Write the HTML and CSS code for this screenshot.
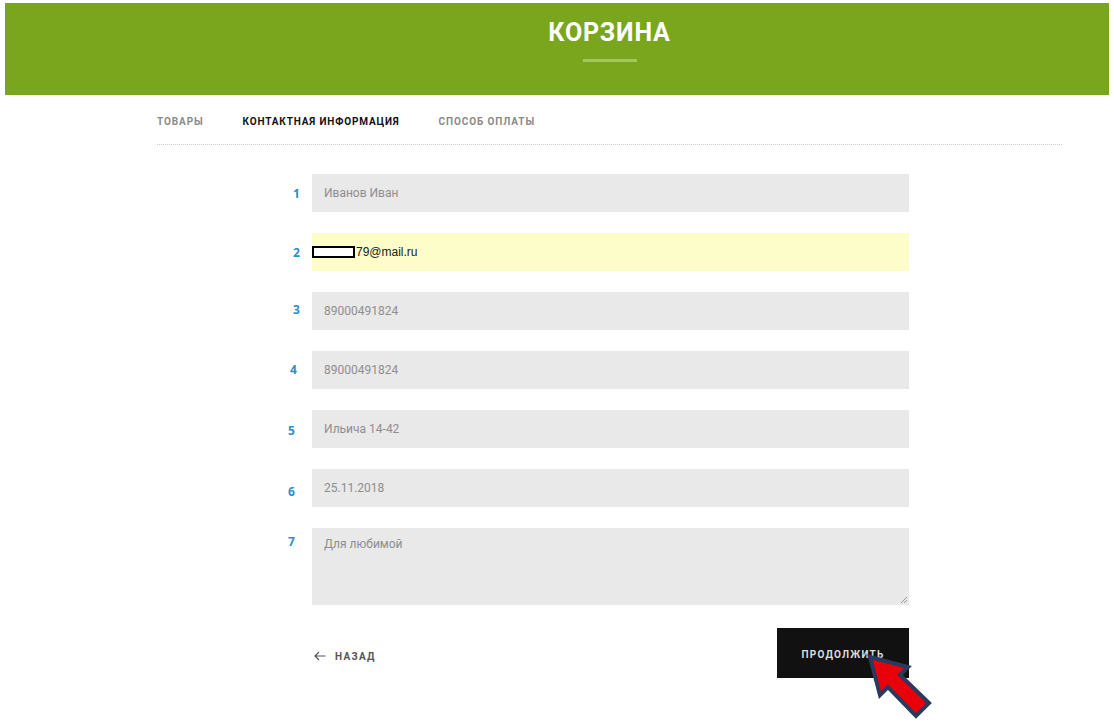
FILE: index.html
```html
<!DOCTYPE html>
<html lang="ru">
<head>
    <meta charset="UTF-8">
    <meta name="viewport" content="width=device-width, initial-scale=1.0">
    <title>Корзина</title>
    <link rel="stylesheet" href="styles.css">
</head>
<body>
    <div class="banner">
        <h1 class="banner_title">КОРЗИНА</h1>
        <div class="banner_line"></div>
    </div>

    <div class="wrap">
        <ul class="steps">
            <li>ТОВАРЫ</li>
            <li class="active">КОНТАКТНАЯ ИНФОРМАЦИЯ</li>
            <li>СПОСОБ ОПЛАТЫ</li>
        </ul>

        <form class="order">
            <span class="num">1</span>
            <div class="field">Иванов Иван</div>

            <span class="num">2</span>
            <div class="field field_auto"><i class="hide"></i>79@mail.ru</div>

            <span class="num n3">3</span>
            <div class="field">89000491824</div>

            <span class="num n4">4</span>
            <div class="field">89000491824</div>

            <span class="num n5">5</span>
            <div class="field">Ильича 14-42</div>

            <span class="num n6">6</span>
            <div class="field">25.11.2018</div>

            <span class="num n7">7</span>
            <div class="field field_area">Для любимой
                <svg class="grip" width="8" height="8" viewBox="0 0 8 8"><path d="M7 1L1 7M7 4L4 7" stroke="#999" stroke-width="1"/></svg>
            </div>

            <span></span>
            <div class="actions">
                <a href="javascript:;" class="back">
                    <svg class="back_arrow" width="12" height="10" viewBox="0 0 12 10"><path d="M11.5 5H1M5 1L1 5L5 9" fill="none" stroke="#555" stroke-width="1.2"/></svg>
                    НАЗАД
                </a>
                <a href="javascript:;" class="next">ПРОДОЛЖИТЬ</a>
                <!-- стрелка-указатель поверх кнопки -->
                <svg class="pointer" width="76" height="80" viewBox="0 0 76 80">
                    <polygon points="10,10 48,20 40,28 69,56 56,69 28,40 20,48" fill="#e8000b" stroke="#2b3a5c" stroke-width="4"/>
                </svg>
            </div>
        </form>
    </div>
</body>
</html>
```

FILE: styles.css
```css
*{
    margin: 0;
    padding: 0;
    box-sizing: border-box;
}
ul{
    list-style: none;
}
a{
    text-decoration: none;
}
body{
    font-family: Roboto, "Liberation Sans", Arial, sans-serif;
    background-color: #fff;
    color: #222;
    padding-bottom: 49px;
}
.banner{
    margin: 3px 5px 0;
    height: 92px;
    background-color: #7aa61e;
    padding-top: 15px;
    padding-left: 105px;
    display: flex;
    flex-direction: column;
    align-items: center;
}
.banner_title{
    color: #fff;
    font-size: 25px;
    font-weight: 700;
    letter-spacing: 0.8px;
    line-height: 30px;
}
.banner_line{
    width: 54px;
    height: 3px;
    margin-top: 11px;
    background-color: #a3c75a;
}
.wrap{
    width: 905px;
    margin-left: 157px;
}
.steps{
    display: flex;
    gap: 39px;
    padding-top: 21px;
    padding-bottom: 16px;
    border-bottom: 1px dotted #c9c9c9;
}
.steps li{
    font-size: 10px;
    font-weight: 700;
    letter-spacing: 0.9px;
    line-height: 12px;
    color: #8a8a8a;
}
.steps li.active{
    color: #111;
    letter-spacing: 0.85px;
}
.order{
    display: grid;
    grid-template-columns: 155px 597px;
    row-gap: 21px;
    margin-top: 29px;
}
.num{
    font-family: "Open Sans", "Liberation Sans", sans-serif;
    font-weight: 700;
    font-size: 12px;
    color: #2b90c8;
    padding-left: 136px;
    padding-top: 11px;
}
.n3{ padding-top: 9px; }
.n4{ padding-left: 133px; padding-top: 10px; }
.n5{ padding-left: 131px; padding-top: 12px; }
.n6{ padding-left: 131px; padding-top: 14px; }
.n7{ padding-left: 131px; padding-top: 5px; }
.field{
    position: relative;
    height: 38px;
    background-color: #e9e9e9;
    padding-left: 12px;
    display: flex;
    align-items: center;
    font-size: 12px;
    color: #8e8e8e;
}
.field_auto{
    background-color: #fdfdc9;
    padding-left: 0;
    font-family: "Liberation Sans", Arial, sans-serif;
    color: #222;
}
.hide{
    display: inline-block;
    width: 43px;
    height: 12px;
    border: 2px solid #000;
    background-color: #fff;
    margin-right: 1px;
}
.field_area{
    height: 77px;
    align-items: flex-start;
    padding-top: 9px;
}
.grip{
    position: absolute;
    right: 1px;
    bottom: 1px;
}
.actions{
    position: relative;
    display: flex;
    justify-content: space-between;
    align-items: center;
    margin-top: 2px;
}
.back{
    display: flex;
    align-items: center;
    padding-left: 2px;
    margin-top: 6px;
    font-size: 10px;
    font-weight: 700;
    letter-spacing: 1.3px;
    color: #555;
}
.back_arrow{
    margin-right: 9px;
}
.next{
    width: 132px;
    height: 50px;
    background-color: #111;
    color: #ddd;
    font-size: 10px;
    font-weight: 700;
    letter-spacing: 1.2px;
    display: flex;
    align-items: center;
    justify-content: center;
    padding-top: 2px;
}
.pointer{
    position: absolute;
    left: 548px;
    top: 19px;
}
```
